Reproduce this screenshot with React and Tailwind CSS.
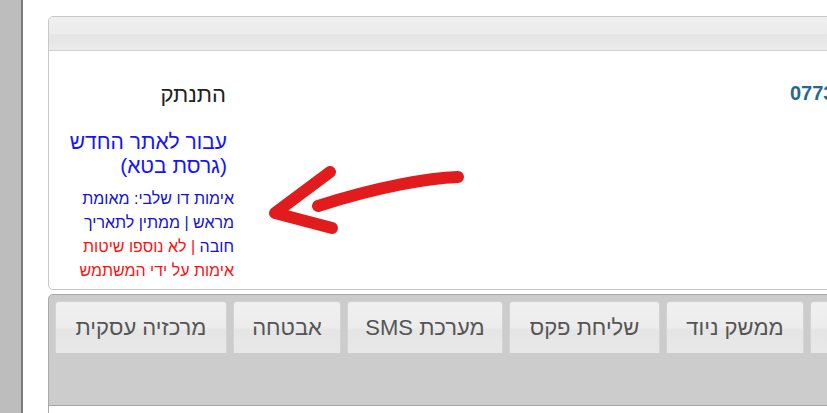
const tabs = [
  { label: 'מרכזיה עסקית', w: 'w-[172px]' },
  { label: 'אבטחה', w: 'w-[108px]' },
  { label: 'מערכת SMS', w: 'w-[156px]' },
  { label: 'שליחת פקס', w: 'w-[151px]' },
  { label: 'ממשק ניוד', w: 'w-[138px]' },
  { label: 'הגדרות', w: 'w-[120px]' },
];

// hand drawn annotation arrow
const Arrow = () => (
  <svg className="absolute left-0 top-0 pointer-events-none" width="827" height="413">
    <path
      d="M458 177 C 430 178, 380 186, 318 206"
      fill="none"
      stroke="#e21c1c"
      strokeWidth="12"
      strokeLinecap="round"
    />
    <path
      d="M330 172 L 275 213 L 332 228"
      fill="none"
      stroke="#e21c1c"
      strokeWidth="12"
      strokeLinecap="round"
      strokeLinejoin="round"
    />
  </svg>
);

const App = () => {
  return (
    <div
      className="relative w-[827px] h-[413px] overflow-hidden flex bg-white"
      style={{ fontFamily: '"Liberation Sans", Arial, sans-serif' }}
    >
      <div className="w-[23px] shrink-0 bg-[#bdbdbd] border-r-2 border-[#7a7a7a]" />

      <div className="shrink-0 w-[1100px] pl-[25px] pt-[16px]">
        {/* top panel */}
        <div className="h-[274px] border border-[#c8c8c8] rounded-[5px] overflow-hidden">
          <div className="h-[34px] border-b border-[#d0d0d0] bg-[linear-gradient(#efefef_0%,#ececec_50%,#e4e4e4_52%,#ebebeb_100%)]" />
          <div className="flex">
            <div dir="rtl" className="w-[192px] shrink-0 text-right pt-[31px]">
              <div className="pr-[15px] text-[22px] leading-[26px] text-[#222]">התנתק</div>
              <div className="pr-[14px] mt-[22px] text-[21px] leading-[24px] text-[#1414ff]">
                עבור לאתר החדש
                <br />
                (גרסת בטא)
              </div>
              <div className="pr-[7px] mt-[9px] text-[16px] leading-[24px] text-[#1010e0]">
                אימות דו שלבי: מאומת
                <br />
                מראש | ממתין לתאריך
                <br />
                חובה <span className="text-[#ff1010]">| לא נוספו שיטות</span>
                <br />
                <span className="text-[#ff1010]">אימות על ידי המשתמש</span>
              </div>
            </div>
            <div className="ml-[549px] pt-[27px] text-[20px] font-bold text-[#236a93]">0773-000000</div>
          </div>
        </div>

        {/* tabs panel */}
        <div className="mt-[4px] border border-[#a9a9a9] rounded-t-[5px] bg-[#cccccc]">
          <div className="flex gap-[6px] pt-[6px] pl-[6px]">
            {tabs.map((t) => (
              <div
                key={t.label}
                dir="rtl"
                className={`${t.w} shrink-0 h-[52px] flex items-center justify-center border border-b-0 border-[#d3d3d3] rounded-t-[4px] bg-[linear-gradient(#f0f0f0_0%,#ececec_50%,#e5e5e5_55%,#e8e8e8_100%)] text-[22px] text-[#555]`}
              >
                {t.label}
              </div>
            ))}
          </div>
          <div className="h-[52px]" />
          <div className="h-[20px] border-t border-[#a9a9a9] bg-white" />
        </div>
      </div>

      <Arrow />
    </div>
  );
};

export default App;
